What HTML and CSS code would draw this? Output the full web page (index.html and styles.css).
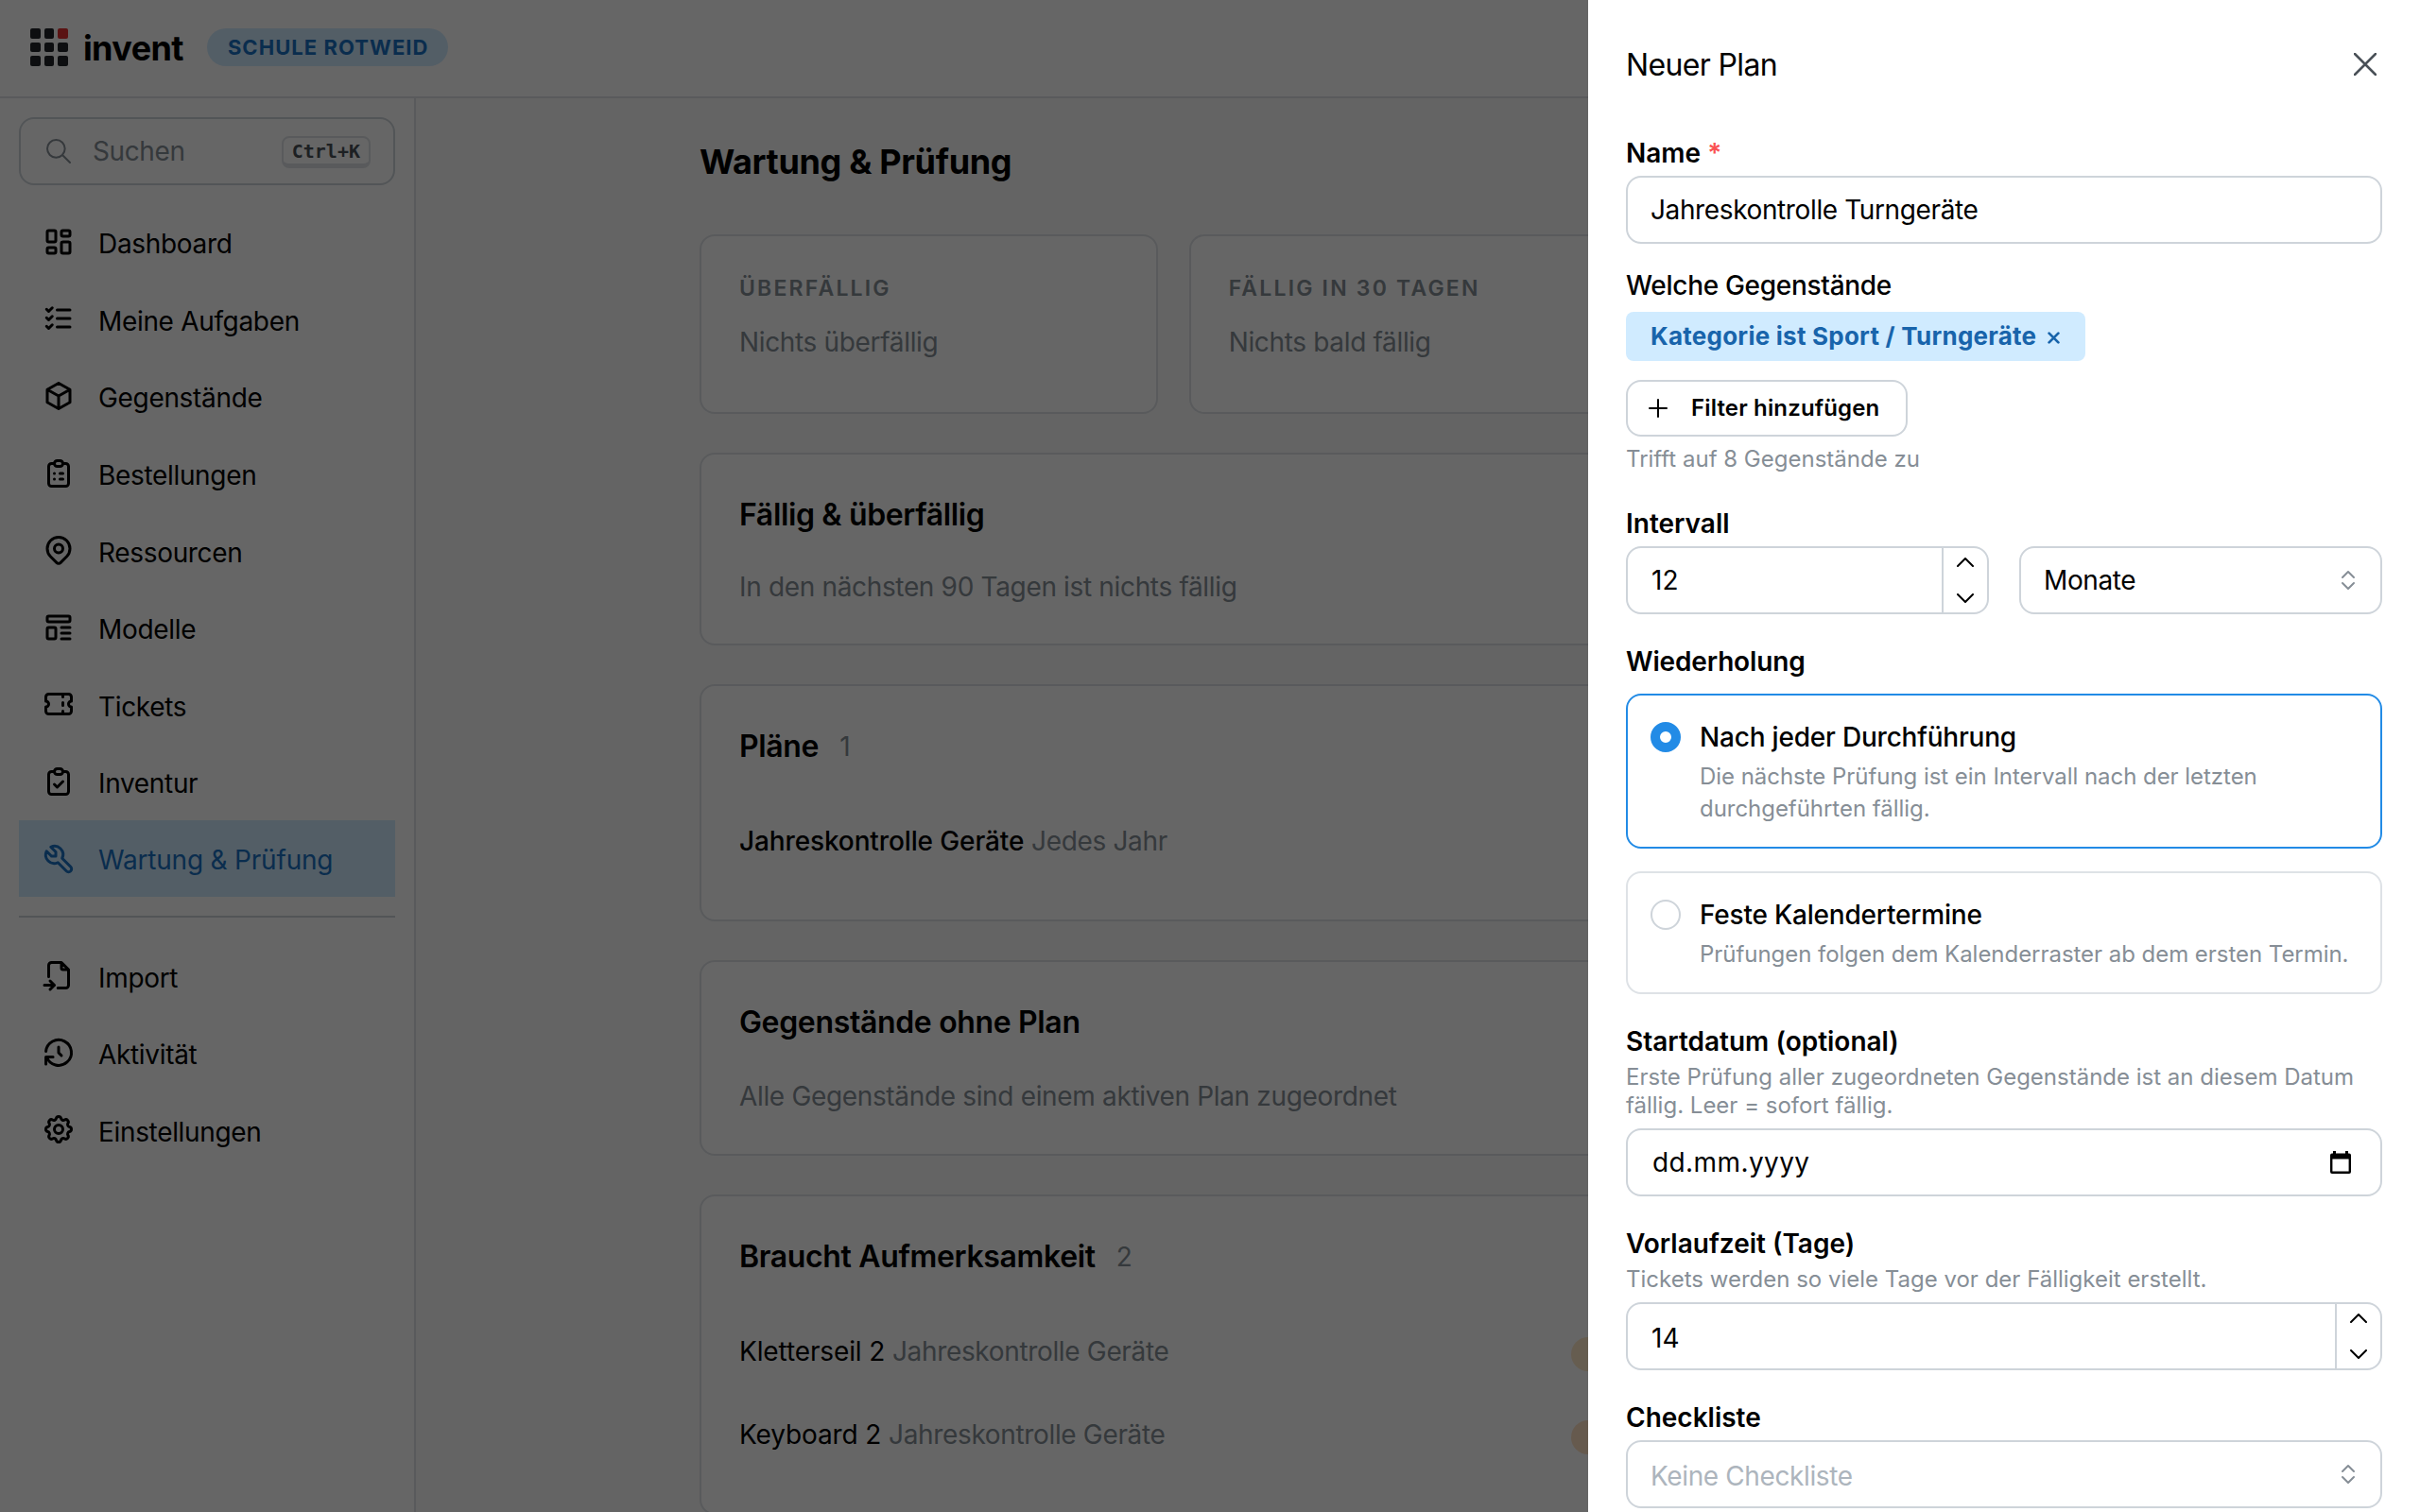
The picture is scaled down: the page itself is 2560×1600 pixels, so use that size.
FILE: index.html
```html
<!DOCTYPE html>
<html lang="de">
<head>
  <meta charset="utf-8">
  <title>invent - Wartung &amp; Prüfung</title>
  <link rel="stylesheet" href="styles.css">
</head>
<body>
  <div class="app">
    <header class="header">
      <div class="logo">
        <i></i><i></i><i class="red"></i>
        <i></i><i></i><i></i>
        <i></i><i></i><i></i>
      </div>
      <div class="brand">invent</div>
      <div class="school">SCHULE ROTWEID</div>
    </header>

    <nav class="sidebar">
      <div class="search">
        <svg class="search-icon" viewBox="0 0 24 24"><path d="M3 10a7 7 0 1 0 14 0a7 7 0 1 0 -14 0M21 21l-6 -6"/></svg>
        <span class="search-text">Suchen</span>
        <kbd>Ctrl+K</kbd>
      </div>

      <a class="nav-item">
        <svg class="icon" viewBox="0 0 24 24"><path d="M5 4h4a1 1 0 0 1 1 1v6a1 1 0 0 1 -1 1h-4a1 1 0 0 1 -1 -1v-6a1 1 0 0 1 1 -1M5 16h4a1 1 0 0 1 1 1v2a1 1 0 0 1 -1 1h-4a1 1 0 0 1 -1 -1v-2a1 1 0 0 1 1 -1M15 12h4a1 1 0 0 1 1 1v6a1 1 0 0 1 -1 1h-4a1 1 0 0 1 -1 -1v-6a1 1 0 0 1 1 -1M15 4h4a1 1 0 0 1 1 1v2a1 1 0 0 1 -1 1h-4a1 1 0 0 1 -1 -1v-2a1 1 0 0 1 1 -1"/></svg>
        <span>Dashboard</span>
      </a>
      <a class="nav-item">
        <svg class="icon" viewBox="0 0 24 24"><path d="M3.5 5.5l1.5 1.5l2.5 -2.5M3.5 11.5l1.5 1.5l2.5 -2.5M3.5 17.5l1.5 1.5l2.5 -2.5M11 6h9M11 12h9M11 18h9"/></svg>
        <span>Meine Aufgaben</span>
      </a>
      <a class="nav-item">
        <svg class="icon" viewBox="0 0 24 24"><path d="M12 3l8 4.5v9l-8 4.5l-8 -4.5v-9l8 -4.5M12 12l8 -4.5M12 12v9M12 12l-8 -4.5"/></svg>
        <span>Gegenstände</span>
      </a>
      <a class="nav-item">
        <svg class="icon" viewBox="0 0 24 24"><path d="M9 5h-2a2 2 0 0 0 -2 2v12a2 2 0 0 0 2 2h10a2 2 0 0 0 2 -2v-12a2 2 0 0 0 -2 -2h-2M9 5a2 2 0 0 1 2 -2h2a2 2 0 0 1 2 2a2 2 0 0 1 -2 2h-2a2 2 0 0 1 -2 -2M9 12h.01M13 12h2M9 16h.01M13 16h2"/></svg>
        <span>Bestellungen</span>
      </a>
      <a class="nav-item">
        <svg class="icon" viewBox="0 0 24 24"><path d="M9 11a3 3 0 1 0 6 0a3 3 0 0 0 -6 0M17.657 16.657l-4.243 4.243a2 2 0 0 1 -2.827 0l-4.244 -4.243a8 8 0 1 1 11.314 0z"/></svg>
        <span>Ressourcen</span>
      </a>
      <a class="nav-item">
        <svg class="icon" viewBox="0 0 24 24"><path d="M4 5a1 1 0 0 1 1 -1h14a1 1 0 0 1 1 1v2a1 1 0 0 1 -1 1h-14a1 1 0 0 1 -1 -1zM4 13a1 1 0 0 1 1 -1h4a1 1 0 0 1 1 1v6a1 1 0 0 1 -1 1h-4a1 1 0 0 1 -1 -1zM14 12h6M14 16h6M14 20h6"/></svg>
        <span>Modelle</span>
      </a>
      <a class="nav-item">
        <svg class="icon" viewBox="0 0 24 24"><path d="M15 5v2M15 11v2M15 17v2M5 5h14a2 2 0 0 1 2 2v3a2 2 0 0 0 0 4v3a2 2 0 0 1 -2 2h-14a2 2 0 0 1 -2 -2v-3a2 2 0 0 0 0 -4v-3a2 2 0 0 1 2 -2"/></svg>
        <span>Tickets</span>
      </a>
      <a class="nav-item">
        <svg class="icon" viewBox="0 0 24 24"><path d="M9 5h-2a2 2 0 0 0 -2 2v12a2 2 0 0 0 2 2h10a2 2 0 0 0 2 -2v-12a2 2 0 0 0 -2 -2h-2M9 5a2 2 0 0 1 2 -2h2a2 2 0 0 1 2 2a2 2 0 0 1 -2 2h-2a2 2 0 0 1 -2 -2M9 14l2 2l4 -4"/></svg>
        <span>Inventur</span>
      </a>
      <a class="nav-item active">
        <svg class="icon" viewBox="0 0 24 24"><path d="M7 10h3v-3l-3.5 -3.5a6 6 0 0 1 8 8l6 6a2 2 0 0 1 -3 3l-6 -6a6 6 0 0 1 -8 -8l3.5 3.5"/></svg>
        <span>Wartung &amp; Prüfung</span>
      </a>
      <div class="nav-divider"></div>
      <a class="nav-item">
        <svg class="icon" viewBox="0 0 24 24"><path d="M14 3v4a1 1 0 0 0 1 1h4M5 13v-8a2 2 0 0 1 2 -2h7l5 5v11a2 2 0 0 1 -2 2h-5.5m-9.5 -2h7m-3 -3l3 3l-3 3"/></svg>
        <span>Import</span>
      </a>
      <a class="nav-item">
        <svg class="icon" viewBox="0 0 24 24"><path d="M12 8v4l2 2M3.05 11a9 9 0 1 1 .5 4m-.5 5v-5h5"/></svg>
        <span>Aktivität</span>
      </a>
      <a class="nav-item">
        <svg class="icon" viewBox="0 0 24 24"><path d="M10.325 4.317c.426 -1.756 2.924 -1.756 3.35 0a1.724 1.724 0 0 0 2.573 1.066c1.543 -.94 3.31 .826 2.37 2.37a1.724 1.724 0 0 0 1.065 2.572c1.756 .426 1.756 2.924 0 3.35a1.724 1.724 0 0 0 -1.066 2.573c.94 1.543 -.826 3.31 -2.37 2.37a1.724 1.724 0 0 0 -2.572 1.065c-.426 1.756 -2.924 1.756 -3.35 0a1.724 1.724 0 0 0 -2.573 -1.066c-1.543 .94 -3.31 -.826 -2.37 -2.37a1.724 1.724 0 0 0 -1.065 -2.572c-1.756 -.426 -1.756 -2.924 0 -3.35a1.724 1.724 0 0 0 1.066 -2.573c-.94 -1.543 .826 -3.31 2.37 -2.37c1 .608 2.296 .07 2.572 -1.065zM9 12a3 3 0 1 0 6 0a3 3 0 0 0 -6 0"/></svg>
        <span>Einstellungen</span>
      </a>
    </nav>

    <main class="main">
      <div class="container">
        <h1>Wartung &amp; Prüfung</h1>
        <div class="stats">
          <div class="card stat">
            <div class="stat-label">ÜBERFÄLLIG</div>
            <div class="dimmed">Nichts überfällig</div>
          </div>
          <div class="card stat">
            <div class="stat-label">FÄLLIG IN 30 TAGEN</div>
            <div class="dimmed">Nichts bald fällig</div>
          </div>
          <div class="card stat"></div>
        </div>

        <section class="card">
          <h2>Fällig &amp; überfällig</h2>
          <div class="dimmed empty">In den nächsten 90 Tagen ist nichts fällig</div>
        </section>

        <section class="card">
          <h2>Pläne <span class="count">1</span></h2>
          <div class="rows">
            <div class="row"><span><b>Jahreskontrolle Geräte</b> <span class="dimmed">Jedes Jahr</span></span></div>
          </div>
        </section>

        <section class="card">
          <h2>Gegenstände ohne Plan</h2>
          <div class="dimmed empty wide">Alle Gegenstände sind einem aktiven Plan zugeordnet</div>
        </section>

        <section class="card">
          <h2>Braucht Aufmerksamkeit <span class="count">2</span></h2>
          <div class="rows">
            <div class="row"><span>Kletterseil 2 <span class="dimmed">Jahreskontrolle Geräte</span></span><span class="tag"></span></div>
            <div class="row"><span>Keyboard 2 <span class="dimmed">Jahreskontrolle Geräte</span></span><span class="tag orange"></span></div>
          </div>
        </section>
      </div>
    </main>
  </div>

  <div class="overlay"></div>

  <aside class="drawer">
    <div class="drawer-header">
      <div class="drawer-title">Neuer Plan</div>
      <svg class="close" viewBox="0 0 24 24"><path d="M1 1l22 22M23 1l-22 22"/></svg>
    </div>

    <div class="field">
      <div class="label">Name <span class="required">*</span></div>
      <div class="input">Jahreskontrolle Turngeräte</div>
    </div>

    <div class="filter">
      <div class="label medium">Welche Gegenstände</div>
      <div class="chip">
        <span>Kategorie ist Sport / Turngeräte</span>
        <svg class="chip-x" viewBox="0 0 12 12"><path d="M1.500 1.500l9 9M10.500 1.500l-9 9"/></svg>
      </div>
      <div class="btn">
        <svg class="plus" viewBox="0 0 20 20"><path d="M10 1v18M1 10h18"/></svg>
        <span>Filter hinzufügen</span>
      </div>
      <div class="match">Trifft auf 8 Gegenstände zu</div>
    </div>

    <div class="interval">
      <div class="field">
        <div class="label">Intervall</div>
        <div class="input number">
          <span>12</span>
          <div class="stepper">
            <svg viewBox="0 0 18 10"><path d="M1 9l8 -8l8 8"/></svg>
            <svg viewBox="0 0 18 10"><path d="M1 1l8 8l8 -8"/></svg>
          </div>
        </div>
      </div>
      <div class="field">
        <div class="input select">
          <span>Monate</span>
          <svg class="selector" viewBox="0 0 16 22"><path d="M2 8l6 -6l6 6M2 14l6 6l6 -6"/></svg>
        </div>
      </div>
    </div>

    <div class="repeat">
      <div class="label">Wiederholung</div>
      <div class="option checked">
        <div class="radio"></div>
        <div>
          <div class="option-title">Nach jeder Durchführung</div>
          <div class="option-desc">Die nächste Prüfung ist ein Intervall nach der letzten<br>durchgeführten fällig.</div>
        </div>
      </div>
      <div class="option">
        <div class="radio"></div>
        <div>
          <div class="option-title">Feste Kalendertermine</div>
          <div class="option-desc">Prüfungen folgen dem Kalenderraster ab dem ersten Termin.</div>
        </div>
      </div>
    </div>

    <div class="field">
      <div class="label">Startdatum (optional)</div>
      <div class="desc">Erste Prüfung aller zugeordneten Gegenstände ist an diesem Datum<br>fällig. Leer = sofort fällig.</div>
      <div class="input select">
        <span class="date">dd.mm.yyyy</span>
        <svg class="calendar" viewBox="0 0 22 24"><path fill-rule="evenodd" d="M3 0h3v2.5h10V0h3v2.5h1a2 2 0 0 1 2 2V22a2 2 0 0 1 -2 2H2a2 2 0 0 1 -2 -2V4.500a2 2 0 0 1 2 -2h1zM2.400 8.500v13.100h17.200V8.500z"/></svg>
      </div>
    </div>

    <div class="field">
      <div class="label">Vorlaufzeit (Tage)</div>
      <div class="desc">Tickets werden so viele Tage vor der Fälligkeit erstellt.</div>
      <div class="input number low">
        <span>14</span>
        <div class="stepper">
          <svg viewBox="0 0 18 10"><path d="M1 9l8 -8l8 8"/></svg>
          <svg viewBox="0 0 18 10"><path d="M1 1l8 8l8 -8"/></svg>
        </div>
      </div>
    </div>

    <div class="field">
      <div class="label">Checkliste</div>
      <div class="input select low">
        <span class="placeholder">Keine Checkliste</span>
        <svg class="selector" viewBox="0 0 16 22"><path d="M2 8l6 -6l6 6M2 14l6 6l6 -6"/></svg>
      </div>
    </div>
  </aside>
</body>
</html>
```

FILE: styles.css
```css
* {
    box-sizing: border-box;
}

body {
    margin: 0;
    height: 1600px;
    overflow: hidden;
    font-family: Inter, sans-serif;
    font-size: 28px;
    line-height: 44px;
    color: #000;
    background-color: #fff;
}

svg {
    fill: none;
    stroke: currentColor;
    stroke-width: 2;
    stroke-linecap: round;
    stroke-linejoin: round;
    flex-shrink: 0;
}

.app {
    display: grid;
    grid-template-columns: 440px 1fr;
    grid-template-rows: 104px 1496px;
    height: 1600px;
    overflow: hidden;
}

/* header */
.header {
    grid-column: 1 / 3;
    display: flex;
    align-items: center;
    padding: 0 32px 2px;
    border-bottom: 2px solid #dee2e6;
}

.logo {
    display: grid;
    grid-template-columns: repeat(3, 10.6px);
    grid-auto-rows: 10.6px;
    gap: 4.1px;
}

.logo i {
    background-color: #212529;
    border-radius: 2px;
}

.logo .red {
    background-color: #e03131;
}

.brand {
    margin: 2px 0 0 16px;
    font-size: 36px;
    font-weight: 700;
    letter-spacing: -0.6px;
}

.school {
    margin-left: 25px;
    height: 40px;
    line-height: 40px;
    padding: 0 21px 0 22px;
    border-radius: 20px;
    font-size: 22px;
    font-weight: 700;
    letter-spacing: 1.05px;
    color: #1971c2;
    background-color: #d0ebff;
}

/* sidebar */
.sidebar {
    padding: 20px 20px 0;
    border-right: 2px solid #dee2e6;
}

.search {
    display: flex;
    align-items: center;
    height: 72px;
    margin-bottom: 19px;
    padding: 0 24px;
    border: 2px solid #ced4da;
    border-radius: 16px;
    color: #868e96;
}

.search-icon {
    width: 32px;
    height: 32px;
    stroke-width: 1.5;
}

.search-text {
    flex: 1;
    margin-left: 20px;
    letter-spacing: -0.4px;
}

kbd {
    height: 34px;
    margin-top: 2px;
    padding: 0 9px;
    border: 2px solid #dee2e6;
    border-bottom-width: 5px;
    border-radius: 8px;
    font-family: "DejaVu Sans Mono", monospace;
    font-size: 20px;
    font-weight: 700;
    line-height: 28px;
    color: #495057;
}

.nav-item {
    display: flex;
    align-items: center;
    height: 81.6px;
    padding-left: 24px;
    letter-spacing: -0.33px;
}

.nav-item span {
    margin: 5px 0 0 24px;
}

.icon {
    width: 36px;
    height: 36px;
}

.active {
    color: #1971c2;
    background-color: #d0ebff;
    letter-spacing: -0.2px;
}

.active span {
    margin-top: 2px;
}

.nav-divider {
    height: 2px;
    margin: 20px 0;
    background-color: #ced4da;
}

/* page */
.main {
    background-color: #fafafa;
    overflow: hidden;
}

.container {
    width: 1520px;
    margin: 0 auto;
    padding-top: 42px;
}

h1 {
    margin: 0 0 52px;
    font-size: 36px;
    font-weight: 700;
    line-height: 50px;
    letter-spacing: -0.33px;
}

h2 {
    display: flex;
    align-items: center;
    margin: 0;
    font-size: 32px;
    font-weight: 600;
    line-height: 44px;
    letter-spacing: -0.35px;
}

.stats {
    display: grid;
    grid-template-columns: repeat(3, 1fr);
    gap: 33px;
}

.card {
    margin-bottom: 41px;
    padding: 42px 40px 38px;
    border: 2px solid #dee2e6;
    border-radius: 16px;
    background-color: #fff;
}

.stat {
    height: 190px;
    padding-top: 37px;
}

.stat-label {
    margin-bottom: 17px;
    font-size: 23px;
    font-weight: 600;
    line-height: 36px;
    letter-spacing: 2.2px;
    color: #868e96;
}

.dimmed {
    color: #868e96;
    letter-spacing: -0.34px;
}

.empty {
    margin-top: 32px;
}

.wide {
    margin-top: 35px;
    line-height: 42px;
    padding-bottom: 2px;
}

.count {
    margin-left: 22px;
    font-size: 28px;
    font-weight: 400;
    color: #868e96;
}

.rows {
    margin-top: 34px;
    padding-bottom: 1px;
    letter-spacing: -0.12px;
}

.row {
    display: flex;
    align-items: center;
    justify-content: space-between;
    height: 88px;
}

.row b {
    font-weight: 500;
}

.tag {
    width: 556px;
    height: 36px;
    margin-top: 6px;
    border-radius: 18px;
    background-color: #ffe8c8;
}

.tag.orange {
    background-color: #ffe0c4;
}

.overlay {
    position: fixed;
    inset: 0;
    background-color: rgba(0, 0, 0, 0.6);
}

/* drawer */
.drawer {
    position: fixed;
    top: 0;
    right: 0;
    bottom: 0;
    width: 880px;
    padding: 44px 40px 0;
    overflow: hidden;
    background-color: #fff;
}

.drawer-header {
    display: flex;
    align-items: center;
    justify-content: space-between;
    height: 48px;
    margin-bottom: 48px;
}

.drawer-title {
    padding-top: 2px;
    font-size: 32px;
    letter-spacing: -0.65px;
}

.close {
    width: 24px;
    height: 24px;
    margin-right: 6px;
    stroke-width: 2.5;
    color: #495057;
}

.field {
    margin-bottom: 28px;
}

.label {
    font-weight: 600;
}

.medium {
    font-weight: 500;
    letter-spacing: -0.3px;
}

.required {
    color: #fa5252;
}

.desc {
    margin-bottom: 9px;
    padding-top: 1px;
    font-size: 24px;
    line-height: 30px;
    color: #868e96;
}

.input {
    display: flex;
    align-items: center;
    justify-content: space-between;
    height: 72px;
    margin-top: 2px;
    padding-left: 24px;
    border: 2px solid #ced4da;
    border-radius: 16px;
    letter-spacing: -0.38px;
}

.low > span {
    padding-top: 3px;
}

.stepper {
    display: flex;
    flex-direction: column;
    justify-content: space-between;
    align-items: center;
    width: 48px;
    height: 100%;
    padding: 10px 0 10px;
    border-left: 2px solid #ced4da;
}

.stepper svg {
    width: 18px;
    height: 10px;
}

.number > span {
    padding-left: 1px;
    letter-spacing: 0;
}

.select {
    padding-right: 26px;
}

.selector {
    width: 16px;
    height: 22px;
    color: #868e96;
}

.calendar {
    width: 22px;
    height: 24px;
    margin-right: 5px;
    fill: #000;
    stroke: none;
}

.date {
    padding-left: 2px;
    letter-spacing: 0.4px;
}

.placeholder {
    color: #adb5bd;
}

.filter {
    margin: -6px 0 29px;
}

.chip {
    display: flex;
    align-items: center;
    width: 486px;
    height: 52px;
    margin: 6px 0 20px;
    padding-left: 26px;
    border-radius: 8px;
    font-size: 26px;
    font-weight: 700;
    letter-spacing: 0.24px;
    color: #1864ab;
    background-color: #d0ebff;
}

.chip-x {
    width: 13px;
    height: 13px;
    margin: 2px 0 0 12px;
    stroke-width: 2.5;
}

.btn {
    display: flex;
    align-items: center;
    width: 298px;
    height: 60px;
    padding-left: 22px;
    border: 2px solid #ced4da;
    border-radius: 16px;
    font-size: 24px;
    font-weight: 600;
    letter-spacing: 0.15px;
}

.plus {
    width: 20px;
    height: 20px;
    margin-right: 25px;
}

.match {
    margin: 6px 0 -1px;
    font-size: 24px;
    line-height: 36px;
    color: #868e96;
}

.interval {
    display: grid;
    grid-template-columns: 1fr 1fr;
    gap: 32px;
    align-items: end;
}

.repeat {
    margin-bottom: 28px;
}

.repeat .label {
    margin-bottom: 12px;
    letter-spacing: -0.15px;
}

.option {
    display: flex;
    margin-bottom: 24px;
    padding: 22px 24px 23px;
    border: 2px solid #dee2e6;
    border-radius: 16px;
}

.option.checked {
    border-color: #228be6;
}

.radio {
    width: 32px;
    height: 32px;
    margin: 6px 20px 0 0;
    border: 2px solid #ced4da;
    border-radius: 50%;
    flex-shrink: 0;
}

.checked .radio {
    border: 10px solid #228be6;
}

.option-title {
    font-weight: 500;
    letter-spacing: -0.2px;
}

.option-desc {
    margin-top: 3px;
    font-size: 24px;
    line-height: 34px;
    letter-spacing: -0.04px;
    color: #868e96;
}
```
